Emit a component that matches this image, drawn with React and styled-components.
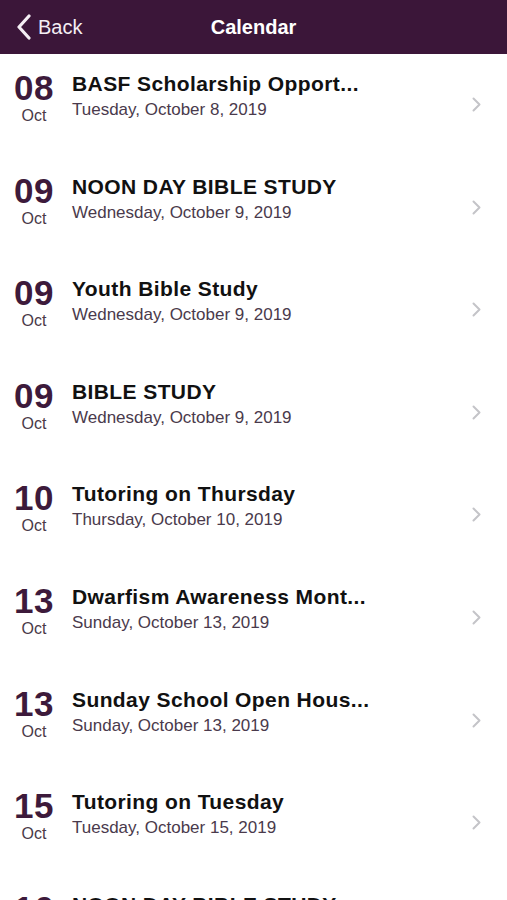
import styled, { createGlobalStyle } from "styled-components";

const GlobalStyle = createGlobalStyle`
  body {
    margin: 0;
    background: #fff;
    font-family: "Liberation Sans", Arial, sans-serif;
  }
`;

const Page = styled.div`
  width: 507px;
  height: 900px;
  overflow: hidden;
  background: #fff;
`;

const Header = styled.div`
  height: 54px;
  background: #3b1639;
  display: flex;
  align-items: center;
  position: relative;
  color: #fff;
`;

const BackButton = styled.div`
  display: flex;
  align-items: center;
  gap: 6px;
  padding-left: 16px;
  font-size: 20px;
  color: #f4eef4;
`;

const Title = styled.div`
  position: absolute;
  left: 0;
  right: 0;
  text-align: center;
  font-size: 20px;
  font-weight: 700;
  pointer-events: none;
`;

const List = styled.div`
  display: flex;
  flex-direction: column;
`;

const Row = styled.div`
  height: 102.6px;
  flex-shrink: 0;
  display: flex;
  align-items: flex-start;
  padding-top: 17px;
  box-sizing: border-box;
`;

const DateCol = styled.div`
  width: 68px;
  display: flex;
  flex-direction: column;
  align-items: center;
`;

const Day = styled.div`
  font-size: 35px;
  font-weight: 700;
  line-height: 34px;
  color: #3d1a3b;
  letter-spacing: 0.5px;
`;

const Month = styled.div`
  font-size: 16px;
  line-height: 22px;
  color: #4a3a48;
`;

const Info = styled.div`
  flex: 1;
  display: flex;
  flex-direction: column;
  padding-left: 4px;
  padding-top: 0px;
`;

const EventName = styled.div`
  font-size: 21px;
  font-weight: 700;
  color: #111;
  line-height: 26px;
  letter-spacing: 0.4px;
`;

const EventDate = styled.div`
  font-size: 17px;
  color: #4a3a4c;
  line-height: 26px;
`;

const Chevron = styled.div`
  width: 62px;
  padding-top: 26px;
  display: flex;
  justify-content: center;
`;

const events = [
  ["08", "BASF Scholarship Opport...", "Tuesday, October 8, 2019"],
  ["09", "NOON DAY BIBLE STUDY", "Wednesday, October 9, 2019"],
  ["09", "Youth Bible Study", "Wednesday, October 9, 2019"],
  ["09", "BIBLE STUDY", "Wednesday, October 9, 2019"],
  ["10", "Tutoring on Thursday", "Thursday, October 10, 2019"],
  ["13", "Dwarfism Awareness Mont...", "Sunday, October 13, 2019"],
  ["13", "Sunday School Open Hous...", "Sunday, October 13, 2019"],
  ["15", "Tutoring on Tuesday", "Tuesday, October 15, 2019"],
  ["16", "NOON DAY BIBLE STUDY", "Wednesday, October 16, 2019"],
];

const App = () => {
  return (
    <Page>
      <GlobalStyle />
      <Header>
        <BackButton>
          <svg width="16" height="26" viewBox="0 0 16 26">
            <path d="M13 2 L3 13 L13 24" fill="none" stroke="#f4eef4" strokeWidth="3.2" strokeLinecap="round" strokeLinejoin="round" />
          </svg>
          Back
        </BackButton>
        <Title>Calendar</Title>
      </Header>
      <List>
        {events.map(([day, name, date], i) => (
          <Row key={i}>
            <DateCol>
              <Day>{day}</Day>
              <Month>Oct</Month>
            </DateCol>
            <Info>
              <EventName>{name}</EventName>
              <EventDate>{date}</EventDate>
            </Info>
            <Chevron>
              <svg width="9" height="15" viewBox="0 0 9 15">
                <path d="M1.5 1.5 L7.5 7.5 L1.5 13.5" fill="none" stroke="#c4c4c8" strokeWidth="2" strokeLinecap="round" strokeLinejoin="round" />
              </svg>
            </Chevron>
          </Row>
        ))}
      </List>
    </Page>
  );
};

export default App;
